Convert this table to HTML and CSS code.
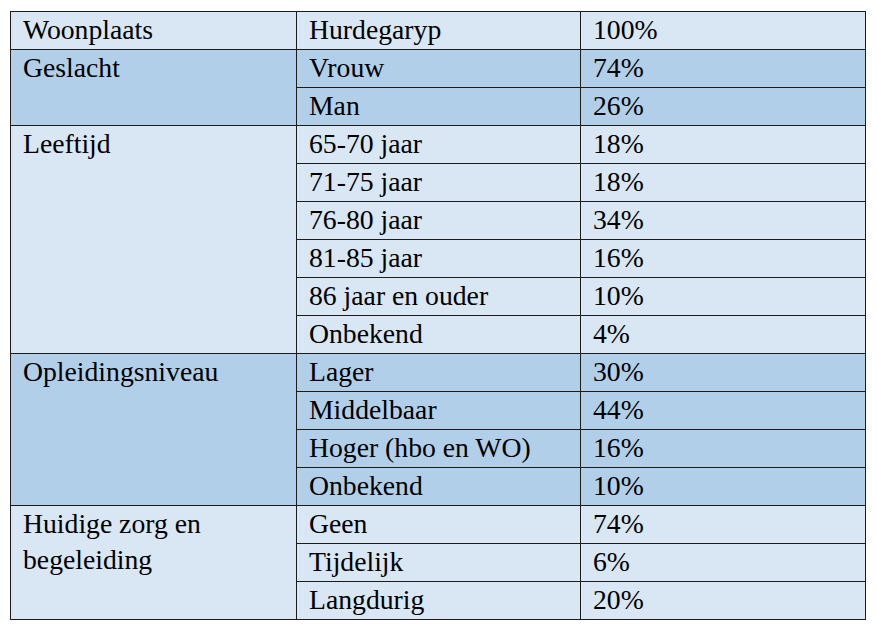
FILE: index.html
```html
<!DOCTYPE html>
<html lang="nl">
<head>
<meta charset="utf-8">
<title>Tabel</title>
<link rel="stylesheet" href="styles.css">
</head>
<body>
<div class="grid" role="table">
  <div class="cell light">Woonplaats</div>
  <div class="cell light">Hurdegaryp</div>
  <div class="cell light">100%</div>

  <div class="cell dark span2">Geslacht</div>
  <div class="cell dark">Vrouw</div>
  <div class="cell dark">74%</div>
  <div class="cell dark">Man</div>
  <div class="cell dark">26%</div>

  <div class="cell light span6">Leeftijd</div>
  <div class="cell light">65-70 jaar</div>
  <div class="cell light">18%</div>
  <div class="cell light">71-75 jaar</div>
  <div class="cell light">18%</div>
  <div class="cell light">76-80 jaar</div>
  <div class="cell light">34%</div>
  <div class="cell light">81-85 jaar</div>
  <div class="cell light">16%</div>
  <div class="cell light">86 jaar en ouder</div>
  <div class="cell light">10%</div>
  <div class="cell light">Onbekend</div>
  <div class="cell light">4%</div>

  <div class="cell dark span4">Opleidingsniveau</div>
  <div class="cell dark">Lager</div>
  <div class="cell dark">30%</div>
  <div class="cell dark">Middelbaar</div>
  <div class="cell dark">44%</div>
  <div class="cell dark">Hoger (hbo en WO)</div>
  <div class="cell dark">16%</div>
  <div class="cell dark">Onbekend</div>
  <div class="cell dark">10%</div>

  <div class="cell light span3">Huidige zorg en<br>begeleiding</div>
  <div class="cell light">Geen</div>
  <div class="cell light">74%</div>
  <div class="cell light">Tijdelijk</div>
  <div class="cell light">6%</div>
  <div class="cell light">Langdurig</div>
  <div class="cell light">20%</div>
</div>
</body>
</html>
```
FILE: styles.css
```css
html, body {
  margin: 0;
  padding: 0;
  background: #ffffff;
}
body {
  padding: 11px 0 0 10px;
  color: #000000;
  font-family: "Liberation Serif", "Times New Roman", serif;
}
.grid {
  display: grid;
  grid-template-columns: 285px 283px 284px;
  grid-auto-rows: 37px;
  gap: 1px;
  padding: 1px;
  width: max-content;
  background: #1c1c1c;
  font-family: "Liberation Serif", "Times New Roman", serif;
  font-size: 27.7px;
  line-height: 36px;
}
.cell {
  padding: 0 0 0 12px;
  white-space: nowrap;
  overflow: hidden;
}
.span2 { grid-row: span 2; }
.span3 { grid-row: span 3; }
.span4 { grid-row: span 4; }
.span6 { grid-row: span 6; }
.light { background: #d9e6f3; }
.dark { background: #b2cfe9; }
```
